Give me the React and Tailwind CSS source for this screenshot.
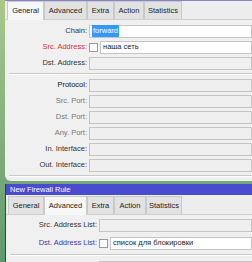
import React from 'react';

const font = { fontFamily: '"Liberation Sans", Arial, sans-serif' };

const Tabs = ({ tabs, active }) => (
  <div className="flex h-[19px] items-end border-b border-[#cfcfcf] bg-[#ededed] pl-[2px]">
    {tabs.map((t) => (
      <div
        key={t.name}
        className={`flex items-center justify-center border border-b-0 border-[#c9c9c9] text-[7.5px] text-[#222] ${t.w} ${
          t.name === active ? 'h-[19px] bg-[#f7f7f7] -mb-px' : 'h-[18px] bg-[#e2e2e2]'
        }`}
      >
        {t.name}
      </div>
    ))}
  </div>
);

const Field = ({ label, color = 'text-[#333]', labelW, h, check, value, selected, disabled }) => (
  <div className={`flex items-center ${h}`}>
    <div className={`${labelW} shrink-0 pr-[2px] text-right text-[7.5px] ${color}`}>{label}</div>
    {check && <div className="mr-[2px] h-[9px] w-[9px] shrink-0 border border-[#9a9a9a] bg-white" />}
    <div
      className={`flex h-[13px] flex-1 items-center border border-[#c4c4c4] pl-[2px] text-[7.5px] text-[#222] ${
        disabled ? 'bg-[#efefef]' : 'bg-white'
      }`}
    >
      {selected ? <span className="bg-[#3399ff] px-px text-white">{value}</span> : value}
    </div>
  </div>
);

const Sep = () => (
  <div className="my-[2px] ml-[4px] h-[2px] border-t border-[#c9c9c9] border-b-white border-b" />
);

export default function App() {
  const top = [
    { name: 'General', w: 'w-[37px]' },
    { name: 'Advanced', w: 'w-[43px]' },
    { name: 'Extra', w: 'w-[27px]' },
    { name: 'Action', w: 'w-[30px]' },
    { name: 'Statistics', w: 'w-[38px]' },
  ];
  return (
    <div style={font} className="h-[262px] w-[252px] overflow-hidden bg-gradient-to-b from-[#a9c98a] via-[#84b07c] to-[#5f9a6e]">
      <div className="ml-[5px] rounded-bl-[6px] border-t border-[#8784c9] bg-[#f0f0f0] pb-[2px]">
        <Tabs tabs={top} active="General" />
        <div className="pt-[3px]">
          <Field labelW="w-[84px]" h="h-[16px]" label="Chain:" value="forward" selected />
          <Field labelW="w-[84px]" h="h-[16px]" label="Src. Address:" color="text-[#d9302b]" check value="наша сеть" />
          <Field labelW="w-[84px]" h="h-[16px]" label="Dst. Address:" disabled />
          <Sep />
          <Field labelW="w-[84px]" h="h-[16px]" label="Protocol:" color="text-[#111]" disabled />
          <Field labelW="w-[84px]" h="h-[16px]" label="Src. Port:" color="text-[#777]" disabled />
          <Field labelW="w-[84px]" h="h-[16px]" label="Dst. Port:" color="text-[#777]" disabled />
          <Field labelW="w-[84px]" h="h-[16px]" label="Any. Port:" color="text-[#777]" disabled />
          <Field labelW="w-[84px]" h="h-[16px]" label="In. Interface:" disabled />
          <Field labelW="w-[84px]" h="h-[16px]" label="Out. Interface:" disabled />
          <Sep />
        </div>
      </div>
      <div className="ml-[5px] mt-[3px] border-l border-[#3a3a55] bg-[#f0f0f0]">
        <div className="flex h-[11px] items-center bg-[#4b4bcf] pl-[4px] text-[7.5px] text-white">New Firewall Rule</div>
        <div className="pt-[1px]">
          <Tabs
            tabs={[
              { name: 'General', w: 'w-[36px]' },
              { name: 'Advanced', w: 'w-[43px]' },
              { name: 'Extra', w: 'w-[27px]' },
              { name: 'Action', w: 'w-[32px]' },
              { name: 'Statistics', w: 'w-[36px]' },
            ]}
            active="Advanced"
          />
        </div>
        <div className="pt-[1px]">
          <Field labelW="w-[93px]" h="h-[18px]" label="Src. Address List:" disabled />
          <Field labelW="w-[93px]" h="h-[18px]" label="Dst. Address List:" color="text-[#3b3bb0]" check value="список для блокировки" />
          <Sep />
          <Field labelW="w-[93px]" h="h-[18px]" label="Layer7 Protocol:" disabled />
        </div>
      </div>
    </div>
  );
}
